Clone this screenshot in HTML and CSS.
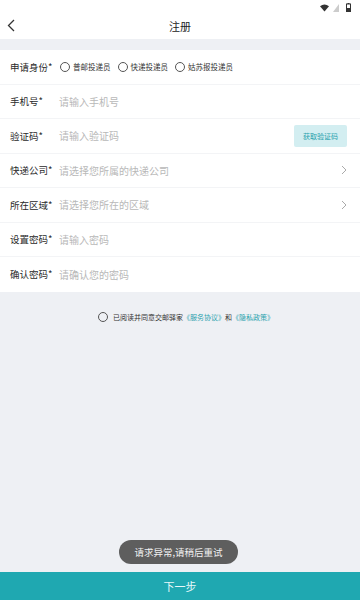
FILE: index.html
```html
<!DOCTYPE html>
<html lang="zh-CN">
<head>
<meta charset="utf-8">
<link rel="stylesheet" href="styles.css">
</head>
<body>
<div class="page">
  <div class="status">
    <svg class="st-wifi" width="9" height="8" viewBox="0 0 9 8"><path d="M0 2.2 Q4.5 -1.2 9 2.2 L4.5 7.5 Z" fill="#333"/></svg>
    <svg class="st-sig" width="6" height="8" viewBox="0 0 6 8"><path d="M6 0 L6 8 L0 8 Z" fill="#ccc"/></svg>
    <svg class="st-bat" width="5" height="9" viewBox="0 0 5 9"><rect x="1.5" y="0" width="2" height="1" fill="#333"/><rect x="0.5" y="1" width="4" height="7.5" fill="none" stroke="#333" stroke-width="1"/><rect x="1" y="5" width="3" height="3" fill="#333"/></svg>
  </div>
  <div class="nav">
    <svg class="back" width="8" height="13" viewBox="0 0 8 13"><path d="M7 1 L1.5 6.5 L7 12" fill="none" stroke="#333" stroke-width="1.3"/></svg>
    <div class="title">注册</div>
  </div>
  <div class="gap"></div>
  <div class="form">
    <div class="row">
      <div class="label">申请身份*</div>
      <div class="radios">
        <div class="radio"><span class="circle"></span>普邮投递员</div>
        <div class="radio"><span class="circle"></span>快递投递员</div>
        <div class="radio"><span class="circle"></span>姑苏报投递员</div>
      </div>
    </div>
    <div class="row">
      <div class="label">手机号*</div>
      <div class="ph">请输入手机号</div>
    </div>
    <div class="row">
      <div class="label">验证码*</div>
      <div class="ph">请输入验证码</div>
      <div class="code">获取验证码</div>
    </div>
    <div class="row">
      <div class="label">快递公司*</div>
      <div class="ph">请选择您所属的快递公司</div>
      <svg class="chev" width="6" height="10" viewBox="0 0 6 10"><path d="M1 1 L5 5 L1 9" fill="none" stroke="#aaa" stroke-width="1"/></svg>
    </div>
    <div class="row">
      <div class="label">所在区域*</div>
      <div class="ph">请选择您所在的区域</div>
      <svg class="chev" width="6" height="10" viewBox="0 0 6 10"><path d="M1 1 L5 5 L1 9" fill="none" stroke="#aaa" stroke-width="1"/></svg>
    </div>
    <div class="row">
      <div class="label">设置密码*</div>
      <div class="ph">请输入密码</div>
    </div>
    <div class="row last">
      <div class="label">确认密码*</div>
      <div class="ph">请确认您的密码</div>
    </div>
  </div>
  <div class="agree">
    <span class="circle big"></span>
    <span>已阅读并同意交邮驿家<span class="link">《服务协议》</span>和<span class="link">《隐私政策》</span></span>
  </div>
  <div class="spacer"></div>
  <div class="next">下一步</div>
  <div class="toast">请求异常,请稍后重试</div>
</div>
</body>
</html>
```

FILE: styles.css
```css
html, body {
  margin: 0;
  padding: 0;
}
body {
  font-family: "Noto Sans CJK SC", "Noto Sans", sans-serif;
  background: #eef0f4;
}
.page {
  position: relative;
  width: 360px;
  height: 600px;
  display: flex;
  flex-direction: column;
  background: #eef0f4;
  overflow: hidden;
}
.status {
  height: 14px;
  background: #fff;
  display: flex;
  justify-content: flex-end;
  align-items: center;
  gap: 4px;
  padding-right: 9px;
  padding-top: 1px;
  box-sizing: border-box;
}
.st-bat { margin-left: 3px; }
.nav {
  height: 25px;
  background: #fff;
  display: flex;
  align-items: center;
  justify-content: center;
  position: relative;
}
.back {
  position: absolute;
  left: 7px;
  top: 5px;
}
.title {
  font-size: 11px;
  color: #222;
  line-height: 14px;
  margin-top: -2px;
}
.gap {
  height: 11px;
}
.form {
  background: #fff;
}
.row {
  height: 34.5px;
  display: flex;
  align-items: center;
  border-bottom: 1px solid #f3f4f6;
  box-sizing: border-box;
  padding-left: 10px;
  padding-right: 13px;
}
.row.last {
  border-bottom: none;
}
.label {
  width: 49px;
  font-size: 9.5px;
  color: #2a2a2a;
  flex-shrink: 0;
}
.ph {
  flex: 1;
  font-size: 10px;
  color: #b8b8b8;
}
.radios {
  display: flex;
  align-items: center;
  gap: 7px;
  margin-left: 1px;
}
.radio {
  display: flex;
  align-items: center;
  font-size: 7.5px;
  color: #333;
  gap: 3px;
}
.circle {
  display: inline-block;
  width: 8px;
  height: 8px;
  border: 1px solid #555;
  border-radius: 50%;
  box-sizing: content-box;
}
.circle.big {
  width: 8px;
  height: 8px;
  border-color: #555;
}
.code {
  width: 53px;
  height: 22px;
  background: #d3eef1;
  color: #2aa2ad;
  font-size: 7px;
  display: flex;
  align-items: center;
  justify-content: center;
  border-radius: 2px;
}
.agree {
  margin-top: 20px;
  display: flex;
  align-items: center;
  gap: 5px;
  font-size: 7px;
  color: #333;
  padding-left: 98px;
}
.link {
  color: #2aa2ad;
}
.spacer {
  flex: 1;
}
.next {
  height: 28px;
  background: #1fa8b1;
  color: #e8f8fa;
  font-size: 11px;
  display: flex;
  align-items: center;
  justify-content: center;
}
.toast {
  position: absolute;
  left: 119px;
  top: 540px;
  width: 119px;
  height: 24px;
  border-radius: 12px;
  background: #5e5e5e;
  color: #f2f2f2;
  font-size: 9.5px;
  display: flex;
  align-items: center;
  justify-content: center;
}
```
